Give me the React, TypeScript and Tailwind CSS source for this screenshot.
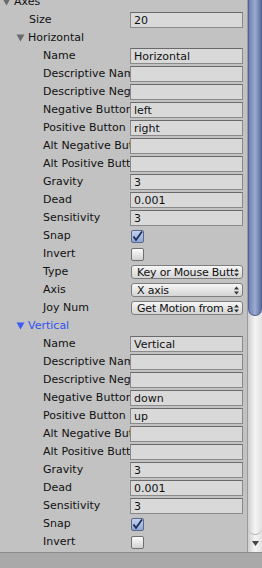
import React from "react";

type Row =
  | { kind: "fold"; label: string; level: number; blue?: boolean }
  | { kind: "field"; label: string; level: number; value?: string }
  | { kind: "check"; label: string; level: number; checked: boolean }
  | { kind: "popup"; label: string; level: number; value: string };

const axisRows = (name: string, neg: string, pos: string, withPopups: boolean, blue?: boolean): Row[] => {
  const rows: Row[] = [
    { kind: "fold", label: name, level: 1, blue },
    { kind: "field", label: "Name", level: 2, value: name },
    { kind: "field", label: "Descriptive Name", level: 2 },
    { kind: "field", label: "Descriptive Negative Name", level: 2 },
    { kind: "field", label: "Negative Button", level: 2, value: neg },
    { kind: "field", label: "Positive Button", level: 2, value: pos },
    { kind: "field", label: "Alt Negative Button", level: 2 },
    { kind: "field", label: "Alt Positive Button", level: 2 },
    { kind: "field", label: "Gravity", level: 2, value: "3" },
    { kind: "field", label: "Dead", level: 2, value: "0.001" },
    { kind: "field", label: "Sensitivity", level: 2, value: "3" },
    { kind: "check", label: "Snap", level: 2, checked: true },
    { kind: "check", label: "Invert", level: 2, checked: false },
  ];
  if (withPopups) {
    rows.push(
      { kind: "popup", label: "Type", level: 2, value: "Key or Mouse Button" },
      { kind: "popup", label: "Axis", level: 2, value: "X axis" },
      { kind: "popup", label: "Joy Num", level: 2, value: "Get Motion from all Joysticks" }
    );
  }
  return rows;
};

const rows: Row[] = [
  { kind: "fold", label: "Axes", level: 0 },
  { kind: "field", label: "Size", level: 1, value: "20" },
  ...axisRows("Horizontal", "left", "right", true),
  ...axisRows("Vertical", "down", "up", false, true),
];

const pad = ["pl-[2px]", "pl-[16px]", "pl-[43px]"];
const textPad = ["pl-[13px]", "pl-[29px]", "pl-[43px]"];

function Triangle({ blue }: { blue?: boolean }) {
  return (
    <svg width="9" height="8" viewBox="0 0 9 8" className="shrink-0 mr-[3px]">
      <polygon points="0.5,0.5 8.5,0.5 4.5,7.5" fill={blue ? "#3d5ef2" : "#6b6b6b"} />
    </svg>
  );
}

function Check({ checked }: { checked: boolean }) {
  return checked ? (
    <div className="w-[13px] h-[13px] rounded-[2px] border border-[#5a6a88] bg-gradient-to-b from-[#c6d3ee] to-[#8ea4d2] flex items-center justify-center">
      <svg width="11" height="11" viewBox="0 0 11 11">
        <path d="M1.5 5.5 L4 9 L10 0.5" fill="none" stroke="#1d2f5c" strokeWidth="1.8" />
      </svg>
    </div>
  ) : (
    <div className="w-[13px] h-[13px] rounded-[2px] border border-[#6f6f6f] bg-gradient-to-b from-[#fbfbfb] to-[#d2d2d2]" />
  );
}

function Popup({ value }: { value: string }) {
  return (
    <div className="w-[112px] h-[14px] rounded-[3px] border border-[#7d7d7d] bg-gradient-to-b from-[#f6f6f6] to-[#d4d4d4] flex items-center pl-[5px] pr-[3px]">
      <span className="flex-1 overflow-hidden whitespace-nowrap leading-none tracking-[-0.2px]">{value}</span>
      <svg width="5" height="9" viewBox="0 0 5 9" className="shrink-0">
        <polygon points="0,3.5 5,3.5 2.5,0.5" fill="#333" />
        <polygon points="0,5.5 5,5.5 2.5,8.5" fill="#333" />
      </svg>
    </div>
  );
}

function RowView({ row }: { row: Row }) {
  if (row.kind === "fold") {
    return (
      <div className={`h-[18px] flex items-center ${pad[row.level]} ${row.blue ? "text-[#2f52f0]" : "text-[#111]"}`}>
        <Triangle blue={row.blue} />
        <span className="whitespace-nowrap">{row.label}</span>
      </div>
    );
  }
  return (
    <div className="h-[18px] flex items-center">
      <div className={`w-[130px] shrink-0 overflow-hidden whitespace-nowrap ${textPad[row.level]}`}>{row.label}</div>
      {row.kind === "field" && (
        <div className="w-[113px] h-[16px] border border-[#8a8a8a] border-t-[#6a6a6a] bg-[#d9d9d9] px-[3px] flex items-center leading-none whitespace-nowrap overflow-hidden">
          {row.value}
        </div>
      )}
      {row.kind === "check" && (
        <div className="pl-[1px]">
          <Check checked={row.checked} />
        </div>
      )}
      {row.kind === "popup" && (
        <div className="pl-[1px]">
          <Popup value={row.value} />
        </div>
      )}
    </div>
  );
}

export default function App() {
  return (
    <div
      className="w-[262px] h-[568px] overflow-hidden bg-[#c2c2c2] flex flex-col text-[11px] text-[#111]"
      style={{ fontFamily: '"DejaVu Sans", Verdana, sans-serif' }}
    >
      <div className="h-[552px] flex">
        <div className="w-[247px] overflow-hidden">
          <div className="-mt-[7px]">
            {rows.map((r, i) => (
              <RowView key={i} row={r} />
            ))}
          </div>
        </div>
        {/* scrollbar */}
        <div className="w-[15px] border-l border-[#9a9a9a] flex flex-col bg-gradient-to-r from-[#cfcfcf] via-[#f4f4f4] to-[#e2e2e2]">
          <div className="flex-1 rounded-b-[7px] border-b border-[#b5b5b5] overflow-hidden">
            <div className="h-[316px] rounded-b-[7px] border border-t-0 border-[#4f6190] bg-gradient-to-r from-[#6f82b2] via-[#9cacd2] to-[#5d70a0]" />
          </div>
          <div className="h-[17px] flex items-center justify-center">
            <svg width="7" height="5" viewBox="0 0 7 5">
              <polygon points="0,0 7,0 3.5,5" fill="#444" />
            </svg>
          </div>
        </div>
      </div>
      <div className="flex-1 border-t border-[#8c8c8c] bg-[#a9a9a9]" />
    </div>
  );
}
